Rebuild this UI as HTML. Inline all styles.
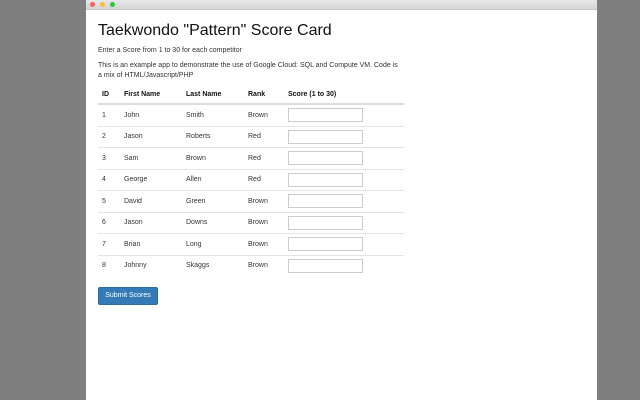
<!DOCTYPE html>
<html><head><style>
body{margin:0;width:640px;height:400px;background:#7f7f7f;font-family:"Liberation Sans",sans-serif;position:relative;overflow:hidden}
.win{position:absolute;left:86px;top:0;width:511px;height:400px;background:#fff}
.tb{height:9px;background:linear-gradient(#e8e8e8,#d4d4d4);border-bottom:1px solid #c8c8c8;position:relative}
.d{position:absolute;top:2px;width:5px;height:5px;border-radius:50%}
.t{position:absolute;color:#222;white-space:nowrap}
h1{position:absolute;left:12px;top:22px;margin:0;font-size:16px;font-weight:normal;color:#111}
.s{font-size:7px;color:#333}
table{position:absolute;left:12px;top:86px;width:306px;border-collapse:collapse;font-size:7px;color:#333}
th{text-align:left;height:17px;border-bottom:2px solid #ddd;padding:0 0 0 4px;font-weight:bold;color:#111}
td{height:20.5px;border-top:1px solid #e4e4e4;padding:0 0 0 4px}
input{width:73px;height:12px;border:1px solid #ccc;margin:0;padding:0;display:block}
.btn{position:absolute;left:12px;top:287px;width:58px;height:16px;background:#337ab7;border:1px solid #2e6da4;border-radius:2px;color:#fff;font-size:7px;text-align:center;line-height:16px}
</style></head><body>
<div class="win">
<div class="tb"><div class="d" style="left:4px;background:#fc5f57"></div><div class="d" style="left:14px;background:#fdbc2e"></div><div class="d" style="left:24px;background:#28c840"></div></div>
<h1>Taekwondo "Pattern" Score Card</h1>
<div class="t s" style="left:12px;top:47px">Enter a Score from 1 to 30 for each competitor</div>
<div class="t s" style="left:12px;top:61px;line-height:10px;white-space:normal;width:305px">This is an example app to demonstrate the use of Google Cloud: SQL and Compute VM. Code is a mix of HTML/Javascript/PHP</div>
<table>
<tr><th style="width:18px">ID</th><th style="width:58px">First Name</th><th style="width:58px">Last Name</th><th style="width:36px">Rank</th><th>Score (1 to 30)</th></tr>
<tr><td>1</td><td>John</td><td>Smith</td><td>Brown</td><td><input></td></tr>
<tr><td>2</td><td>Jason</td><td>Roberts</td><td>Red</td><td><input></td></tr>
<tr><td>3</td><td>Sam</td><td>Brown</td><td>Red</td><td><input></td></tr>
<tr><td>4</td><td>George</td><td>Allen</td><td>Red</td><td><input></td></tr>
<tr><td>5</td><td>David</td><td>Green</td><td>Brown</td><td><input></td></tr>
<tr><td>6</td><td>Jason</td><td>Downs</td><td>Brown</td><td><input></td></tr>
<tr><td>7</td><td>Brian</td><td>Long</td><td>Brown</td><td><input></td></tr>
<tr><td>8</td><td>Johnny</td><td>Skaggs</td><td>Brown</td><td><input></td></tr>
</table>
<div class="btn">Submit Scores</div>
</div>
</body></html>
